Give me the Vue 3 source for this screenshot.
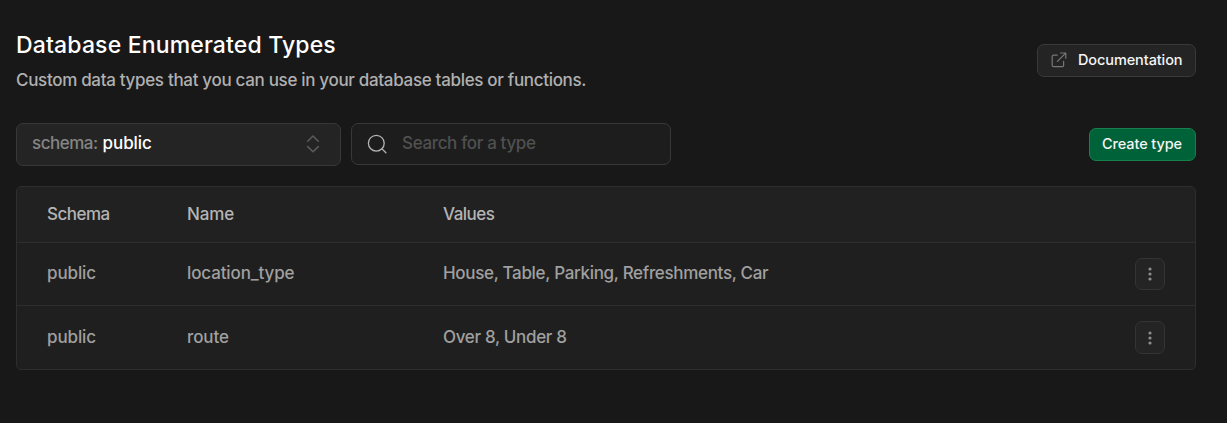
<script setup>
const rows = [
  { schema: 'public', name: 'location_type', values: 'House, Table, Parking, Refreshments, Car', key: 'location' },
  { schema: 'public', name: 'route', values: 'Over 8, Under 8', key: 'route' },
]
</script>

<template>
  <main class="page">
    <header class="head">
      <div>
        <h1>Database Enumerated Types</h1>
        <p>Custom data types that you can use in your database tables or functions.</p>
      </div>
      <button class="btn docs">
        <svg width="16" height="16" viewBox="0 0 16 16" fill="none" stroke="#777" stroke-width="1.2" stroke-linecap="round" stroke-linejoin="round">
          <path d="M6.2 3.2H2.4a1.2 1.2 0 0 0-1.2 1.2v9a1.2 1.2 0 0 0 1.2 1.2h9a1.2 1.2 0 0 0 1.2-1.2V9.4M9.6 1h5.200v5.200M14.600 1.200 6.400 9.400" />
        </svg>
        <span class="t-docs">Documentation</span>
      </button>
    </header>

    <section class="toolbar">
      <button class="select">
        <span class="t-label">schema:</span><span class="t-public">public</span>
        <svg width="14" height="18" viewBox="0 0 14 18" fill="none" stroke="#5a5a5a" stroke-width="1.6" stroke-linecap="round" stroke-linejoin="round">
          <path d="M1.700 6.200 7 1l5.300 5.200M1.700 11.600 7 16.800l5.300-5.200" />
        </svg>
      </button>
      <div class="search">
        <svg width="20" height="20" viewBox="0 0 20 20" fill="none" stroke="#b4b4b4" stroke-width="1.3" stroke-linecap="round">
          <circle cx="9.300" cy="9.200" r="7.900" /><path d="m15 14.900 3.900 3.900" />
        </svg>
        <span class="t-search">Search for a type</span>
      </div>
      <button class="btn create"><span class="t-create">Create type</span></button>
    </section>

    <section class="table">
      <div class="row header">
        <span class="cell">Schema</span>
        <span class="cell t-name">Name</span>
        <span class="cell">Values</span>
      </div>
      <div v-for="row in rows" :key="row.key" class="row" :class="row.key">
        <span class="cell t-name">{{ row.schema }}</span>
        <span class="cell t-name">{{ row.name }}</span>
        <span class="cell t-values">{{ row.values }}</span>
        <button class="more" aria-label="More">
          <svg width="4" height="14" viewBox="0 0 4 14" fill="#8c8c8c">
            <circle cx="2" cy="2" r="1.600" /><circle cx="2" cy="7" r="1.600" /><circle cx="2" cy="12" r="1.600" />
          </svg>
        </button>
      </div>
    </section>
  </main>
</template>

<style>
html, body { background: #181818; }
</style>

<style scoped>
.page {
  box-sizing: border-box;
  height: 423px;
  padding: 29px 31px 0 16px;
  background: #181818;
  color: #a0a0a0;
  font: 450 17px/24px Inter, "Liberation Sans", sans-serif;
  white-space: nowrap;
}
.page * { box-sizing: border-box; }
button { margin: 0; padding: 0; font: inherit; color: inherit; }
h1, p { margin: 0; }
.head { display: flex; justify-content: space-between; align-items: flex-start; height: 94px; }
h1 { color: #fff; font-size: 23px; line-height: 32px; font-weight: 500; letter-spacing: 0.16px; }
p { color: #b0b0b0; margin-top: 7px; letter-spacing: -0.32px; }
.btn { display: flex; align-items: center; height: 33px; border: 1px solid #393939; border-radius: 7px; background: #242424; color: #f5f5f5; font-size: 14.500px; font-weight: 500; line-height: 20px; letter-spacing: -0.1px; }
.btn span { padding-bottom: 2px; }
.docs { width: 159px; margin-top: 15px; padding-left: 13px; gap: 11px; }
.docs svg { margin-bottom: 1px; }
.toolbar { display: flex; height: 63px; align-items: flex-start; }
.select { display: flex; align-items: center; width: 325px; height: 43px; padding: 0 20px 0 15px; border: 1px solid #383838; border-radius: 7px; background: #242424; }
.select span { padding-bottom: 3px; }
.search span, .cell { padding-bottom: 2px; }
.select svg { margin-left: auto; margin-bottom: 1px; }
.t-label { color: #858585; margin-right: 5px; letter-spacing: -0.5px; }
.t-public { color: #fff; font-weight: 500; letter-spacing: -0.1px; }
.search { display: flex; align-items: center; width: 320px; height: 42px; margin-left: 10px; padding-left: 15px; gap: 15px; border: 1px solid #383838; border-radius: 7px; background: #1d1d1d; color: #505050; letter-spacing: -0.35px; }
.create { width: 107px; margin: 5px 0 0 auto; padding-left: 12px; background: #006239; border-color: #16804f; }
.table { height: 184px; border: 1px solid #2e2e2e; border-radius: 5px; background: #1f1f1f; overflow: hidden; }
.row { display: grid; grid-template-columns: 140px 256px 1fr 30px; align-items: center; height: 63px; padding: 0 30px; border-bottom: 1px solid #2e2e2e; }
.header { height: 56px; background: #212121; color: #b4b4b4; letter-spacing: -0.5px; }
.t-name { letter-spacing: -0.12px; }
.t-values { letter-spacing: -0.32px; }
.route { height: 63px; border-bottom: 0; }
.more { display: flex; align-items: center; justify-content: center; width: 30px; height: 32px; border: 1px solid #343434; border-radius: 7px; background: #242424; }
.route .more { height: 33px; }
</style>
